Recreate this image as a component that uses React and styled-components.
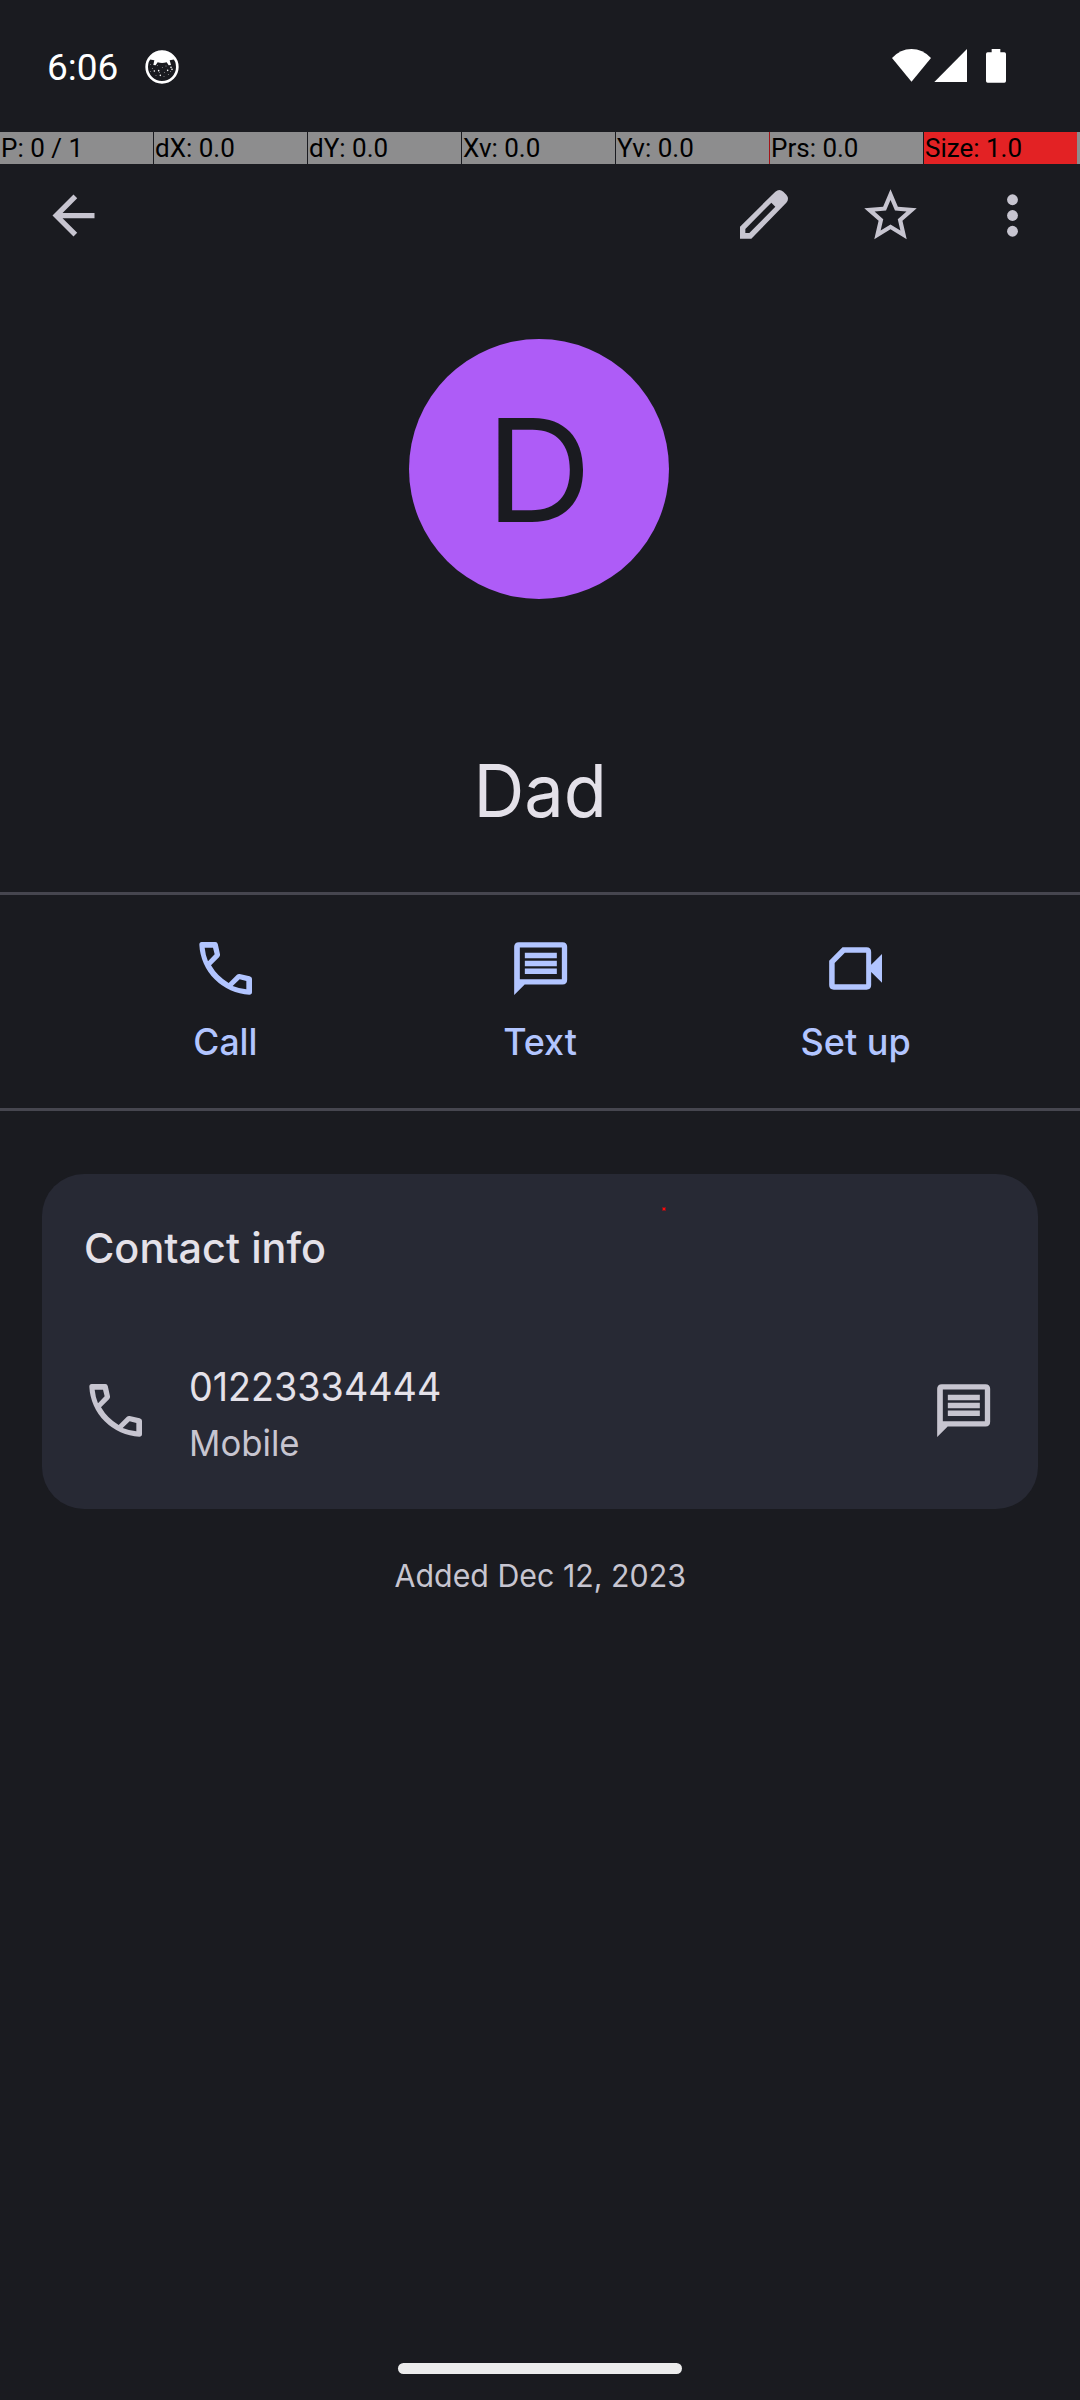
import React from "react";
import styled, { createGlobalStyle } from "styled-components";

const colors = {
  background: "#1a1b20",
  card: "#272934",
  text: "#e4e1e9",
  muted: "#c7c5d0",
  accent: "#b2c5ff",
  divider: "#46464f",
};

const GlobalStyle = createGlobalStyle`
  body { margin: 0; background: ${colors.background}; }
  * { box-sizing: border-box; }
`;

const Screen = styled.div`
  position: relative;
  display: flex;
  flex-direction: column;
  width: 1080px;
  height: 2400px;
  overflow: hidden;
  background: ${colors.background};
  color: ${colors.text};
  font-family: Inter, Roboto, "Liberation Sans", sans-serif;
`;

const StatusBar = styled.header`
  display: flex;
  justify-content: space-between;
  height: 132px;
  padding: 43px 72px 0 47px;
  color: #fff;
`;

const StatusGroup = styled.div`
  display: flex;
  align-items: flex-start;
  padding-top: ${(p) => p.$top || 0}px;
`;

const Clock = styled.time`
  width: 98px;
  font: 400 37px/50px Roboto, sans-serif;
`;

const Glyph = styled.svg`
  display: block;
  flex: none;
  width: ${(p) => p.$w || 63}px;
  height: ${(p) => p.$h || 63}px;
  fill: currentColor;
`;

const DebugBar = styled.div`
  display: flex;
  gap: 1px;
  height: 32px;
  background: ${colors.background};
`;

const DebugCell = styled.div`
  width: 153px;
  flex: none;
  padding-left: 1px;
  background: ${(p) => (p.$hot ? "#e32224" : "#8d8d8e")};
  box-shadow: ${(p) => (p.$marked ? "-1px 0 0 #a31418" : "none")};
  color: #000;
  font: 400 26px/32px Roboto, sans-serif;
  white-space: pre;
`;

const DebugRest = styled.div`
  flex: 1;
  margin-left: -1px;
  background: #8d8d8e;
`;

const Toolbar = styled.nav`
  display: flex;
  height: 103px;
  padding: 20px 36px 0 42px;
  color: ${colors.muted};
`;

const ToolbarActions = styled.div`
  display: flex;
  margin-left: auto;
  gap: 63px;
`;

const IconButton = styled.button`
  display: block;
  width: 63px;
  height: 63px;
  margin: 0 ${(p) => p.$pull || 0}px 0 0;
  padding: 0;
  border: 0;
  background: none;
  color: inherit;
`;

const Avatar = styled.div`
  display: flex;
  justify-content: center;
  width: 260px;
  height: 260px;
  margin: 72px 0 0 409px;
  border-radius: 50%;
  background: #ae5cf7;
  color: ${colors.background};
  font-size: 143px;
  line-height: 262px;
`;

const Fit = styled.span`
  display: inline-block;
  transform: scaleX(${(p) => p.$x || 1});
  transform-origin: ${(p) => p.$from || "center"};
  white-space: pre;
`;

const Name = styled.h1`
  margin: 148px 0 57px;
  font-size: 73px;
  font-weight: 400;
  line-height: 88px;
  text-align: center;
`;

const Actions = styled.div`
  display: flex;
  height: 219px;
  padding: 42px 67px 0 68px;
  border: solid ${colors.divider};
  border-width: 3px 0;
`;

const Action = styled.button`
  display: flex;
  flex: 1;
  flex-direction: column;
  align-items: center;
  gap: 20px;
  padding: 0;
  border: 0;
  background: none;
  color: ${colors.accent};
  font: 500 37px/44px Inter, Roboto, sans-serif;
`;

const Card = styled.section`
  height: 335px;
  margin: 63px 42px 0;
  padding: 49px 43px 0 42px;
  border-radius: 42px;
  background: ${colors.card};
`;

const CardTitle = styled.h2`
  margin: 0;
  font-size: 41px;
  font-weight: 500;
  line-height: 50px;
`;

const PhoneRow = styled.div`
  display: flex;
  align-items: flex-start;
  margin-top: 90px;
  color: ${colors.muted};

  > svg { margin-top: 16px; }
`;

const PhoneText = styled.div`
  display: flex;
  flex: 1;
  flex-direction: column;
  align-items: flex-start;
  gap: 10px;
  padding-left: 42px;
`;

const PhoneNumber = styled.div`
  color: ${colors.text};
  font-size: 40px;
  line-height: 48px;
`;

const PhoneType = styled.div`
  font-size: 36px;
  line-height: 44px;
`;

const Added = styled.p`
  margin: 47px 0 0;
  color: ${colors.muted};
  font-size: 31.5px;
  line-height: 40px;
  text-align: center;
`;

const HomeHandle = styled.div`
  width: 284px;
  height: 11px;
  margin: auto 0 26px 398px;
  border-radius: 6px;
  background: #ececec;
`;

const TouchPoint = styled.i`
  position: absolute;
  left: 662px;
  top: 1207px;
  width: 4px;
  height: 4px;
  border: 1px solid #7c1820;
  background: #ff0a0a;
`;

const speckles = [
  [452, 103], [457, 116], [463, 123], [452, 124], [472, 107], [476, 122],
  [487, 112], [498, 108], [513, 112], [478, 128], [493, 128], [503, 121],
  [512, 125], [468, 136], [481, 136], [492, 140], [505, 134], [516, 118],
];

const CatIcon = () => (
  <Glyph viewBox="435 60 102 102" $w={34} $h={34}>
    <circle cx="486" cy="111" r="46" fill="none" stroke="currentColor" strokeWidth="8" />
    <path d="M446 88 Q463 62 486 62 Q509 62 526 88 L509 91 L513 105 L506 106 L500 97 Q486 101 473 97 L467 106 L460 105 L463 91Z" />
    {speckles.map(([x, y], i) => (
      <circle key={i} cx={x} cy={y} r={i % 3 === 2 ? 2.4 : 1.3} />
    ))}
  </Glyph>
);

const StatusIcons = () => (
  <Glyph viewBox="513 54 351 108" $w={117} $h={36}>
    <path d="M516 84 Q541 57 574.500 57 Q608 57 633 84 L574.500 155Z" />
    <path d="M643 156 L741 57 V156Z" />
    <path d="M815 57 H841 V67 H853 Q858 67 858 72 V153 Q858 158.500 853 158.500 H803 Q798 158.500 798 153 V72 Q798 67 803 67 H815Z" />
  </Glyph>
);

const BackIcon = () => (
  <Glyph viewBox="0 0 24 24">
    <path d="M20 11H7.830l5.590-5.590L12 4l-8 8 8 8 1.410-1.410L7.830 13H20v-2z" />
  </Glyph>
);

const EditIcon = () => (
  <Glyph viewBox="39 462 189 189" fillRule="evenodd">
    <path d="M60 590 L166 485 Q178 475 190 485 L199 494 Q209 506 199 518 L94 626 H60Z M76 597 V609 H88 L166 530 L154 518Z" />
  </Glyph>
);

const StarIcon = () => (
  <Glyph viewBox="0 0 24 24">
    <path d="M22 9.240l-7.190-.62L12 2 9.190 8.630 2 9.240l5.460 4.730L5.820 21 12 17.270 18.180 21l-1.630-7.030L22 9.240zM12 15.400l-3.760 2.270 1-4.280-3.320-2.880 4.380-.38L12 6.100l1.710 4.040 4.380.38-3.320 2.880 1 4.280L12 15.400z" />
  </Glyph>
);

const MoreIcon = () => (
  <Glyph viewBox="0 0 24 24">
    <circle cx="12" cy="6" r="2.070" />
    <circle cx="12" cy="12" r="2.070" />
    <circle cx="12" cy="18" r="2.070" />
  </Glyph>
);

const CallIcon = () => (
  <Glyph viewBox="102 111 189 189" fillRule="evenodd">
    <path d="M125 126 H166 Q172 126 173.500 133 L180 163 Q181 168 177 172 L153 196 Q172.500 229.500 206 249 L230 225 Q234 221 239 222 L269 228.500 Q276 230 276 236 V277 Q276 284 268 284 A158 158 0 0 1 118 134 Q118 126 125 126Z M134 143 Q136 164 144 184 L164 163 L159 143Z M259 268 Q238 266 218 258 L239 238 L259 243Z" />
  </Glyph>
);

const MessageIcon = () => (
  <Glyph viewBox="86.500 110.500 189 189" fillRule="evenodd">
    <path d="M116 126 H247 Q261 126 261 140 V239 Q261 253 247 253 H133.500 L102 284.500 V140 Q102 126 116 126Z M119 142 V237 H245 V142Z M134 157.500 H230 V174 H134Z M134 181.500 H230 V198 H134Z M134 205 H230 V221.500 H134Z" />
  </Glyph>
);

const VideoIcon = () => (
  <Glyph viewBox="131.500 111 189 189" fillRule="evenodd">
    <path d="M187 142 H259 Q273 142 273 156 V194 L305.500 162 V248 L273 216 V255 Q273 269 259 269 H161 Q147 269 147 255 V182Z M194 158 L163.500 189 V253 H258 V158Z" />
  </Glyph>
);

const readings = ["P: 0 / 1", "dX: 0.0", "dY: 0.0", "Xv: 0.0", "Yv: 0.0", "Prs: 0.0", "Size: 1.0"];

const actions = [
  { label: "Call", Icon: CallIcon, fit: 0.96 },
  { label: "Text", Icon: MessageIcon, fit: 0.97 },
  { label: "Set up", Icon: VideoIcon, fit: 0.975 },
];

export default function App() {
  return (
    <Screen>
      <GlobalStyle />
      <StatusBar>
        <StatusGroup>
          <Clock>6:06</Clock>
          <StatusGroup $top={7}>
            <CatIcon />
          </StatusGroup>
        </StatusGroup>
        <StatusGroup $top={5}>
          <StatusIcons />
        </StatusGroup>
      </StatusBar>
      <DebugBar>
        {readings.map((r) => (
          <DebugCell key={r} $hot={r.startsWith("Size")} $marked={r.startsWith("Prs")}>
            {r}
          </DebugCell>
        ))}
        <DebugRest />
      </DebugBar>
      <Toolbar>
        <IconButton aria-label="Back"><BackIcon /></IconButton>
        <ToolbarActions>
          <IconButton aria-label="Edit"><EditIcon /></IconButton>
          <IconButton aria-label="Favorite" $pull={-4}><StarIcon /></IconButton>
          <IconButton aria-label="More"><MoreIcon /></IconButton>
        </ToolbarActions>
      </Toolbar>
      <Avatar><Fit $x={1.03}>D</Fit></Avatar>
      <Name><Fit $x={0.965}>Dad</Fit></Name>
      <Actions>
        {actions.map(({ label, Icon, fit }) => (
          <Action key={label}>
            <Icon />
            <Fit $x={fit}>{label}</Fit>
          </Action>
        ))}
      </Actions>
      <Card>
        <CardTitle><Fit $x={1.01} $from="left">Contact info</Fit></CardTitle>
        <PhoneRow>
          <CallIcon />
          <PhoneText>
            <PhoneNumber><Fit $x={0.942} $from="left">01223334444</Fit></PhoneNumber>
            <PhoneType><Fit $x={0.965} $from="left">Mobile</Fit></PhoneType>
          </PhoneText>
          <MessageIcon />
        </PhoneRow>
      </Card>
      <Added><Fit $x={0.963}>Added Dec 12, 2023</Fit></Added>
      <HomeHandle />
      <TouchPoint />
    </Screen>
  );
}
